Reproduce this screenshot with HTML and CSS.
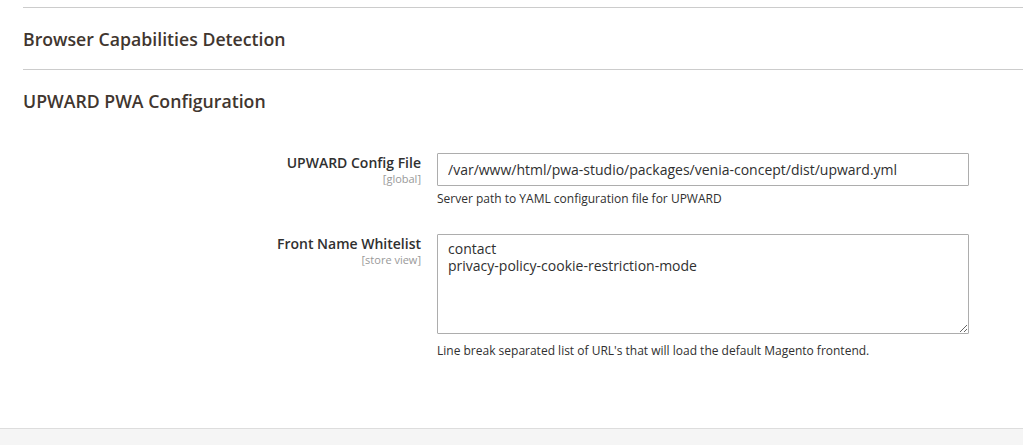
FILE: index.html
```html
<!DOCTYPE html>
<html lang="en">

<head>
    <meta charset="UTF-8">
    <meta name="viewport" content="width=device-width, initial-scale=1.0">
    <title>UPWARD PWA Configuration</title>

    <link rel="stylesheet" href="styles.css">
</head>

<body>
    <div class="page">
        <div class="section">
            <a class="section-title" href="#">Browser Capabilities Detection</a>
        </div>

        <div class="section">
            <a class="section-title" href="#">UPWARD PWA Configuration</a>

            <fieldset class="config">
                <!-- UPWARD config file -->
                <div class="field">
                    <label class="field-label" for="upwardFile">
                        <span>UPWARD Config File</span>
                        <span class="scope">[global]</span>
                    </label>
                    <div class="field-control">
                        <input type="text" id="upwardFile" class="input-text"
                            value="/var/www/html/pwa-studio/packages/venia-concept/dist/upward.yml">
                        <p class="note">Server path to YAML configuration file for UPWARD</p>
                    </div>
                </div>

                <!-- Front name whitelist -->
                <div class="field">
                    <label class="field-label" for="frontNames">
                        <span>Front Name Whitelist</span>
                        <span class="scope">[store view]</span>
                    </label>
                    <div class="field-control">
                        <textarea id="frontNames" class="textarea">contact
privacy-policy-cookie-restriction-mode</textarea>
                        <p class="note note-textarea">Line break separated list of URL's that will load the default Magento frontend.</p>
                    </div>
                </div>
            </fieldset>
        </div>
    </div>

    <div class="page-footer"></div>
</body>

</html>
```

FILE: styles.css
```css
body {
  margin: 0;
  font-family: 'Open Sans', 'Noto Sans', sans-serif;
  color: #303030;
  background: #ffffff;
}
/* Main content area, lines run to the right edge */
.page {
  padding: 7px 0 0 23px;
  height: 428px;
  box-sizing: border-box;
}
.section {
  border-top: 1px solid #cccccc;
}
.section-title {
  display: block;
  padding: 21px 0 20px;
  font-size: 17.7px;
  line-height: 20px;
  font-weight: 600;
  color: #41362f;
  text-decoration: none;
}
/* Config fields: label column + control column */
.config {
  border: 0;
  margin: 22px 0 0;
  padding: 0;
}
.field {
  display: grid;
  grid-template-columns: 398px 532px;
  column-gap: 16px;
  margin-bottom: 27px;
}
.field-label {
  display: flex;
  flex-direction: column;
  align-items: flex-end;
  padding-top: 1px;
  font-size: 14px;
  font-weight: 600;
  line-height: 18px;
  color: #303030;
}
.scope {
  font-size: 11px;
  font-weight: 400;
  line-height: 14px;
  color: #999999;
}
.input-text,
.textarea {
  display: block;
  width: 100%;
  box-sizing: border-box;
  border: 1px solid #adadad;
  border-radius: 1px;
  font-family: inherit;
  font-size: 14px;
  color: #303030;
  background: #ffffff;
  margin: 0;
}
.input-text {
  height: 33px;
  padding: 0 10px;
}
.textarea {
  height: 100px;
  padding: 5px 10px;
  line-height: 17px;
  resize: vertical;
}
.note {
  margin: 5px 0 0;
  font-size: 12px;
  line-height: 16px;
  color: #303030;
}
.note-textarea {
  margin-top: 9px;
}
.page-footer {
  border-top: 1px solid #dddddd;
  background: #f5f5f5;
  height: 30px;
}
```
